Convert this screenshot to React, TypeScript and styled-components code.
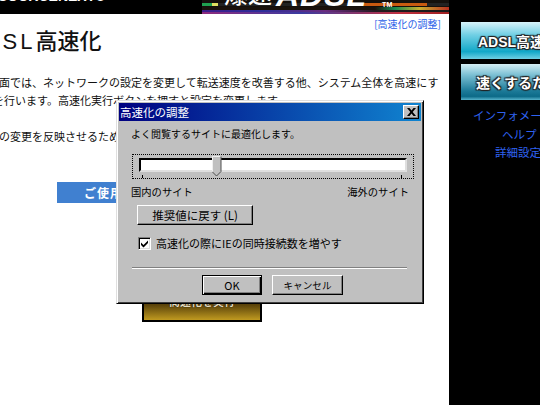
import React from "react";
import styled, { createGlobalStyle } from "styled-components";

const JP = `"Noto Sans CJK JP", "Liberation Sans", sans-serif`;
const LATIN_JP = `"Liberation Sans", "Noto Sans CJK JP", sans-serif`;

const GlobalStyle = createGlobalStyle`
  html, body {
    margin: 0;
    padding: 0;
    background: #000;
    overflow: hidden;
  }
`;

const Page = styled.div`
  position: relative;
  display: flex;
  width: 540px;
  height: 405px;
  overflow: hidden;
  font-family: ${JP};
  background: #000;
`;

const Main = styled.main`
  width: 449px;
  flex-shrink: 0;
  background: #fff;
  overflow: hidden;
`;

const TopBar = styled.header`
  display: flex;
  justify-content: space-between;
  height: 14px;
  background: #000;
  overflow: hidden;
`;

const Logo = styled.div`
  margin: -11px 0 0 -2px;
  color: #fff;
  font: bold 14px/14px "Liberation Sans", sans-serif;
  white-space: nowrap;
`;

const Banner = styled.div`
  display: flex;
  width: 247px;
  height: 14px;
  padding-left: 22px;
  box-sizing: border-box;
  overflow: hidden;
  color: #fff;
  background:
    linear-gradient(90deg, #1fa050 0 10px, #e0e060 10px 16px, #222 16px 160px, #c85a10 160px 225px, #222 225px) 0 3px / 100% 3px no-repeat,
    linear-gradient(90deg, #1a120c 0 70%, #168a50 78%, #c8b030 88%, #b83020 100%) 0 7px / 100% 3px no-repeat,
    linear-gradient(90deg, #3b1d8a 0%, #2e2f9a 25%, #6a2c80 50%, #241a20 70%, #1a1a1a 100%) 0 8px / 100% 4px no-repeat,
    linear-gradient(90deg, #8e2a7c, #3a3aa0 40%, #c03040 80%, #a02020) 0 12px / 100% 2px no-repeat,
    #14100c;
`;

const BannerKana = styled.span`
  margin-top: -19px;
  font: 500 24px/24px ${JP};
`;

const BannerTitle = styled.span`
  margin: -18px 0 0 4px;
  font: italic 900 32px/26px "Liberation Sans", sans-serif;
  letter-spacing: 1px;
`;

const BannerMark = styled.span`
  margin: 2px 0 0 15px;
  font: bold 7px/6px "Liberation Sans", sans-serif;
`;

const AdjustRow = styled.div`
  display: flex;
  justify-content: flex-end;
  height: 11px;
  padding: 4px 8px 0 0;
`;

const AdjustLink = styled.a`
  color: #2b5fe8;
  font-size: 10px;
  line-height: 12px;
`;

const Heading = styled.h1`
  margin: -7px 0 0 -34px;
  color: #111;
  font-size: 22px;
  line-height: 34px;
  font-weight: 500;
  white-space: nowrap;
`;

const HeadingLatin = styled.span`
  font-family: "Liberation Sans", sans-serif;
  letter-spacing: 3px;
`;

const BodyText = styled.p<{ $gap: number; $indent: number }>`
  margin: ${p => p.$gap}px 0 0 ${p => p.$indent}px;
  color: #111;
  font-size: 11px;
  line-height: 17.5px;
  white-space: nowrap;
`;

const NoticeBar = styled.div`
  display: flex;
  align-items: center;
  height: 21px;
  width: 250px;
  margin: 37px 0 0 57px;
  padding-left: 27px;
  box-sizing: border-box;
  color: #fff;
  background: #4080d0;
  font-size: 12px;
  font-weight: 700;
  letter-spacing: 1px;
`;

const RunButton = styled.div`
  display: flex;
  align-items: flex-start;
  justify-content: center;
  width: 120px;
  height: 40px;
  margin: 79px 0 0 142px;
  padding-top: 13px;
  box-sizing: border-box;
  border: 1px solid #000;
  border-width: 0 2px 2px;
  background: linear-gradient(#3a2a04 0, #5a430a 60%, #c09a20 100%);
  overflow: hidden;
`;

const RunLabel = styled.span`
  color: #e4dcc0;
  font-size: 11px;
  font-weight: 700;
  line-height: 12px;
  text-shadow: 0 0 1px #000;
`;

const Sidebar = styled.aside`
  flex: 1;
  min-width: 0;
  padding: 22px 0 0 12px;
  background: #000;
  overflow: hidden;
`;

const NavButton = styled.div<{ $tone: "bright" | "deep"; $indent: number }>`
  display: flex;
  align-items: center;
  width: 90px;
  height: ${p => (p.$tone === "bright" ? 37 : 36)}px;
  margin-bottom: 5px;
  padding-left: ${p => p.$indent}px;
  box-sizing: border-box;
  color: #fff;
  font-family: ${LATIN_JP};
  font-size: 14px;
  font-weight: 700;
  white-space: nowrap;
  text-shadow: 0 0 1px #222, 1px 1px 1px #222, -1px -1px 1px #222, 1px -1px 1px #222, -1px 1px 1px #222;
  background: ${p =>
    p.$tone === "bright"
      ? "linear-gradient(#d8f4fa 0, #70cfe4 35%, #12a8c8 80%, #6fd0e4 100%)"
      : "linear-gradient(#d4eef4 0, #7cc0d4 30%, #1c7a98 75%, #0c6a88 90%, #58b4cc 100%)"};
`;

const NavLinks = styled.nav`
  display: flex;
  flex-direction: column;
  margin-top: 6px;
`;

const NavLink = styled.a<{ $indent: number }>`
  margin-left: ${p => p.$indent}px;
  color: #2f62f0;
  font-size: 11.5px;
  line-height: 18.5px;
  white-space: nowrap;
`;

const Dialog = styled.div`
  position: absolute;
  left: 116px;
  top: 100px;
  width: 308px;
  height: 204px;
  box-sizing: border-box;
  padding: 2px;
  display: flex;
  flex-direction: column;
  background: #c0c0c0;
  border: 1px solid;
  border-color: #dfdfdf #000 #000 #dfdfdf;
  box-shadow: inset 1px 1px 0 #fff, inset -1px -1px 0 #404040;
  color: #000;
`;

const TitleBar = styled.div`
  display: flex;
  align-items: center;
  justify-content: space-between;
  height: 18px;
  padding: 0 2px 0 1px;
  color: #fff;
  background: linear-gradient(90deg, #000080, #1084d0);
  font-size: 11.5px;
  line-height: 18px;
`;

const CloseButton = styled.div`
  display: flex;
  align-items: center;
  justify-content: center;
  width: 16px;
  height: 14px;
  background: #c0c0c0;
  border: 1px solid;
  border-color: #fff #000 #000 #fff;
  box-shadow: inset -1px -1px 0 #808080;
  box-sizing: border-box;
`;

const DialogBody = styled.div`
  flex: 1;
  display: flex;
  flex-direction: column;
  padding: 4px 14px 0 12px;
`;

const Lead = styled.div`
  height: 18px;
  font-size: 10px;
  line-height: 18px;
`;

const SliderFrame = styled.div`
  position: relative;
  width: 282px;
  height: 25px;
  margin: 11px 0 0 1px;
  box-sizing: border-box;
  border: 1px dotted #000;
  padding: 3px 6px 0;
`;

const SliderTrack = styled.div`
  height: 14px;
  box-sizing: border-box;
  background: #fff;
  border: 2px solid;
  border-color: #000 #dfdfdf #dfdfdf #000;
`;

const SliderThumb = styled.svg`
  position: absolute;
  left: 79px;
  top: 1px;
`;

const SliderTick = styled.span<{ $side: "left" | "right"; $offset: number }>`
  position: absolute;
  ${p => p.$side}: ${p => p.$offset}px;
  bottom: 0;
  width: 1px;
  height: 3px;
  background: #000;
`;

const RangeLabels = styled.div`
  display: flex;
  justify-content: space-between;
  width: 278px;
  height: 18px;
  margin-top: 4px;
  font-size: 10.3px;
  line-height: 18px;
`;

const ResetButton = styled.div`
  display: flex;
  align-items: center;
  justify-content: center;
  width: 116px;
  height: 20px;
  margin: 4px 0 0 6px;
  box-sizing: border-box;
  background: #c0c0c0;
  border: 1px solid;
  border-color: #fff #000 #000 #fff;
  box-shadow: inset -1px -1px 0 #808080;
  font-size: 11.5px;
`;

const CheckRow = styled.label`
  display: flex;
  align-items: center;
  gap: 5px;
  height: 18px;
  margin: 9px 0 0 7px;
  font-size: 11px;
  white-space: nowrap;
`;

const CheckBox = styled.span`
  display: flex;
  align-items: center;
  justify-content: center;
  width: 13px;
  height: 13px;
  box-sizing: border-box;
  background: #fff;
  border: 1px solid;
  border-color: #808080 #fff #fff #808080;
  box-shadow: inset 1px 1px 0 #000, inset -1px -1px 0 #dfdfdf;
`;

const Divider = styled.hr`
  width: 275px;
  height: 0;
  margin: 15px 0 0 1px;
  border: 0;
  border-top: 1px solid #808080;
  border-bottom: 1px solid #fff;
`;

const Actions = styled.div`
  display: flex;
  gap: 10px;
  margin: 6px 0 0 71px;
`;

const ActionButton = styled.div<{ $primary?: boolean; $width: number }>`
  display: flex;
  align-items: center;
  justify-content: center;
  width: ${p => p.$width}px;
  height: 20px;
  box-sizing: border-box;
  background: #c0c0c0;
  border: 1px solid;
  border-color: ${p => (p.$primary ? "#000" : "#fff #000 #000 #fff")};
  box-shadow: ${p =>
    p.$primary
      ? "inset 1px 1px 0 #fff, inset -1px -1px 0 #000, inset -2px -2px 0 #808080"
      : "inset -1px -1px 0 #808080"};
  font-size: ${p => (p.$primary ? 11 : 9.6)}px;
`;

export default function App() {
  return (
    <Page>
      <GlobalStyle />
      <Main>
        <TopBar>
          <Logo>SOURCENEXT®</Logo>
          <Banner>
            <BannerKana>爆速</BannerKana>
            <BannerTitle>ADSL</BannerTitle>
            <BannerMark>TM</BannerMark>
          </Banner>
        </TopBar>
        <AdjustRow>
          <AdjustLink>[高速化の調整]</AdjustLink>
        </AdjustRow>
        <Heading>
          <HeadingLatin>ADSL</HeadingLatin>高速化
        </Heading>
        <BodyText $gap={15} $indent={-12}>
          画面では、ネットワークの設定を変更して転送速度を改善する他、システム全体を高速にす
        </BodyText>
        <BodyText $gap={0} $indent={-7}>
          を行います。高速化実行ボタンを押すと設定を変更します。
        </BodyText>
        <BodyText $gap={18.5} $indent={-1}>
          の変更を反映させるためにパソコンを再起動してください。
        </BodyText>
        <NoticeBar>ご使用の前に</NoticeBar>
        <RunButton>
          <RunLabel>高速化を実行</RunLabel>
        </RunButton>
      </Main>
      <Sidebar>
        <NavButton $tone="bright" $indent={17}>ADSL高速化</NavButton>
        <NavButton $tone="deep" $indent={15}>速くするために</NavButton>
        <NavLinks>
          <NavLink $indent={12}>インフォメーション</NavLink>
          <NavLink $indent={41}>ヘルプ</NavLink>
          <NavLink $indent={34}>詳細設定</NavLink>
        </NavLinks>
      </Sidebar>
      <Dialog>
        <TitleBar>
          高速化の調整
          <CloseButton>
            <svg width="9" height="8" viewBox="0 0 9 8">
              <path d="M0 0h2.500l2 2.400 2-2.400H9L5.700 4 9 8H6.500l-2-2.400-2 2.400H0l3.300-4z" fill="#000" />
            </svg>
          </CloseButton>
        </TitleBar>
        <DialogBody>
          <Lead>よく閲覧するサイトに最適化します。</Lead>
          <SliderFrame>
            <SliderTrack />
            <SliderThumb width="10" height="21" viewBox="0 0 10 21">
              <path d="M0.500 0.500h8.500v15l-4.500 4.500-4.500-4.500z" fill="#c0c0c0" />
              <path d="M0.500 15.500v-15h8" fill="none" stroke="#efefef" />
              <path d="M9 0.500v15l-4.500 4.500-4-4" fill="none" stroke="#505050" />
            </SliderThumb>
            <SliderTick $side="left" $offset={9} />
            <SliderTick $side="right" $offset={11} />
          </SliderFrame>
          <RangeLabels>
            <span>国内のサイト</span>
            <span>海外のサイト</span>
          </RangeLabels>
          <ResetButton>推奨値に戻す (L)</ResetButton>
          <CheckRow>
            <CheckBox>
              <svg width="9" height="9" viewBox="0 0 9 9">
                <path d="M1 3.500l2.500 2.500L8 1.500v2.500L3.500 8.500 1 6z" fill="#000" />
              </svg>
            </CheckBox>
            高速化の際にIEの同時接続数を増やす
          </CheckRow>
          <Divider />
          <Actions>
            <ActionButton $primary $width={60}>OK</ActionButton>
            <ActionButton $width={71}>キャンセル</ActionButton>
          </Actions>
        </DialogBody>
      </Dialog>
    </Page>
  );
}
